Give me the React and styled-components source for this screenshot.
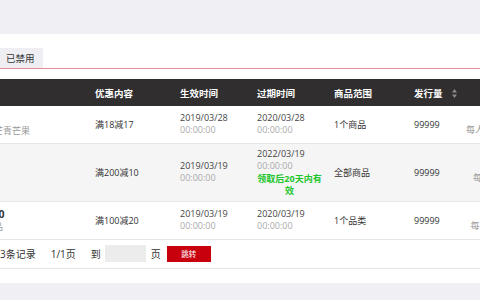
import styled, { createGlobalStyle } from "styled-components";

const GlobalStyle = createGlobalStyle`
  html, body {
    margin: 0;
    padding: 0;
    background: #efeff4;
    overflow: hidden;
    font-family: "Open Sans", "Noto Sans CJK SC", sans-serif;
  }
`;

const Page = styled.div`
  width: 480px;
  height: 300px;
  padding-top: 34px;
  box-sizing: border-box;
`;

const Panel = styled.div`
  background: #fff;
  padding: 14px 0 14px;
  overflow: hidden;
`;

const TabBar = styled.div`
  display: flex;
  border-bottom: 1px solid #e48e96;
`;

const Tab = styled.div`
  height: 20px;
  padding: 0 8px 0 6px;
  display: flex;
  align-items: center;
  background: #eeeef3;
  color: #333;
  font-size: 9.5px;
`;

const Table = styled.table`
  margin-top: 10px;
  margin-left: -34px;
  border-collapse: collapse;
  table-layout: fixed;
  width: 557px;
`;

const HeadRow = styled.tr`
  height: 27px;
  background: #302e2f;
`;

const Th = styled.th`
  padding: 0 0 0 ${(p) => (p.$center ? 0 : 10)}px;
  text-align: ${(p) => (p.$center ? "center" : "left")};
  color: #fff;
  font-size: 9.5px;
  font-weight: 700;
  white-space: nowrap;
`;

const Row = styled.tr`
  height: ${(p) => p.$h}px;
  background: ${(p) => (p.$shade ? "#f5f5f5" : "#fff")};
`;

const Td = styled.td`
  padding: 0 0 0 ${(p) => (p.$center ? 0 : 10)}px;
  border-bottom: 1px solid #e6e6e6;
  font-size: 9px;
  color: #333;
  vertical-align: middle;
  white-space: nowrap;
  text-align: ${(p) => (p.$center ? "center" : "left")};
`;

const Name = styled.div`
  font-size: 10.5px;
  font-weight: 700;
  color: #333;
  line-height: 14px;
`;

const Sub = styled.div`
  font-size: 9px;
  color: #999;
  line-height: 12px;
`;

const DateLine = styled.div`
  line-height: 12px;
  color: ${(p) => (p.$muted ? "#aaa" : "#444")};
`;

const Hint = styled.div`
  width: 65px;
  margin-top: 1px;
  white-space: normal;
  text-align: center;
  color: #22c52e;
  font-size: 9px;
  font-weight: 700;
  line-height: 11.5px;
`;

const Limit = styled.div`
  line-height: 12px;
  color: ${(p) => (p.$muted ? "#999" : "#333")};
`;

const SortIcon = () => (
  <svg width="5" height="9" viewBox="0 0 5 9" style={{ marginLeft: 9, verticalAlign: -1 }}>
    <path d="M2.5 0 L5 3.5 L0 3.5 Z" fill="#8a8a8a" />
    <path d="M2.5 9 L5 5.5 L0 5.5 Z" fill="#8a8a8a" />
  </svg>
);

const Pager = styled.div`
  height: 28px;
  display: flex;
  align-items: center;
  margin-left: -10px;
  border-bottom: 1px solid #e6e6e6;
  font-size: 10px;
  color: #333;
`;

const PagerText = styled.span`
  margin-right: ${(p) => p.$gap}px;
  white-space: nowrap;
`;

const PageInput = styled.div`
  width: 41px;
  height: 17px;
  background: #ececec;
  margin-right: 5px;
`;

const JumpButton = styled.button`
  width: 44px;
  height: 16px;
  margin-left: 6px;
  border: none;
  padding: 0;
  background: #c8000e;
  color: #fff;
  font-size: 7.5px;
  font-family: inherit;
`;

const rows = [
  {
    h: 37,
    name: "芒果",
    sub: "新品芒青芒果",
    deal: "满18减17",
    start: "2019/03/28",
    end: "2020/03/28",
    scope: "1个商品",
    qty: "99999",
    limitTop: "限领",
    limit: "每人限领1张",
  },
  {
    h: 58,
    shade: true,
    name: "测试",
    sub: "全部",
    deal: "满200减10",
    start: "2019/03/19",
    end: "2022/03/19",
    hint: "领取后20天内有效",
    scope: "全部商品",
    qty: "99999",
    limitTop: "限领",
    limit: "每人限领",
  },
  {
    h: 38,
    name: "满100",
    sub: "日用品",
    deal: "满100减20",
    start: "2019/03/19",
    end: "2020/03/19",
    scope: "1个品类",
    qty: "99999",
    limitTop: "限领",
    limit: "每人限2张",
  },
];

export default function App() {
  return (
    <Page>
      <GlobalStyle />
      <Panel>
        <TabBar>
          <Tab>已禁用</Tab>
        </TabBar>
        <Table>
          <colgroup>
            <col style={{ width: 119 }} />
            <col style={{ width: 85 }} />
            <col style={{ width: 77 }} />
            <col style={{ width: 77 }} />
            <col style={{ width: 80 }} />
            <col style={{ width: 55 }} />
            <col style={{ width: 64 }} />
          </colgroup>
          <thead>
            <HeadRow>
              <Th>名称</Th>
              <Th>优惠内容</Th>
              <Th>生效时间</Th>
              <Th>过期时间</Th>
              <Th>商品范围</Th>
              <Th>
                发行量
                <SortIcon />
              </Th>
              <Th $center>限制</Th>
            </HeadRow>
          </thead>
          <tbody>
            {rows.map((r, i) => (
              <Row key={i} $h={r.h} $shade={r.shade}>
                <Td>
                  <Name>{r.name}</Name>
                  <Sub>{r.sub}</Sub>
                </Td>
                <Td>{r.deal}</Td>
                <Td>
                  <DateLine>{r.start}</DateLine>
                  <DateLine $muted>00:00:00</DateLine>
                </Td>
                <Td>
                  <DateLine>{r.end}</DateLine>
                  <DateLine $muted>00:00:00</DateLine>
                  {r.hint && <Hint>{r.hint}</Hint>}
                </Td>
                <Td>{r.scope}</Td>
                <Td>{r.qty}</Td>
                <Td $center>
                  <Limit>{r.limitTop}</Limit>
                  <Limit $muted>{r.limit}</Limit>
                </Td>
              </Row>
            ))}
          </tbody>
        </Table>
        <Pager>
          <PagerText $gap={15}>共3条记录</PagerText>
          <PagerText $gap={15}>1/1页</PagerText>
          <PagerText $gap={4}>到</PagerText>
          <PageInput />
          <PagerText $gap={0}>页</PagerText>
          <JumpButton>跳转</JumpButton>
        </Pager>
      </Panel>
    </Page>
  );
}
